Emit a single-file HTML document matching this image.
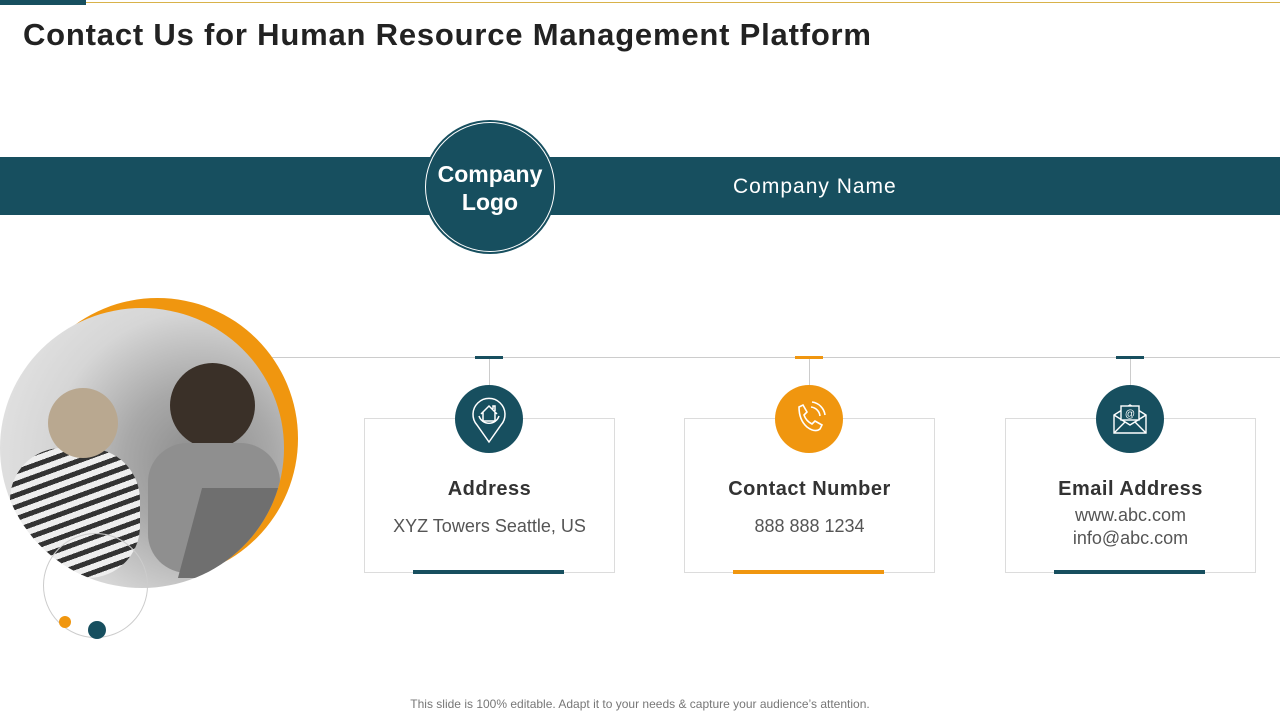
<!DOCTYPE html>
<html><head><meta charset="utf-8"><style>
body{margin:0;width:1280px;height:720px;position:relative;overflow:hidden;background:#fff;font-family:"Liberation Sans",sans-serif}
.a{position:absolute}
.card{position:absolute;top:418px;width:249px;height:153px;border:1px solid #dcdcdc;background:#fff;text-align:center;color:#444}
.card h3{margin:0;position:absolute;top:59px;width:100%;font-size:20px;font-weight:bold;color:#333;letter-spacing:0.5px}
.card p{margin:0;position:absolute;top:96px;width:100%;font-size:18px;color:#555;line-height:23px}
.bar{position:absolute;left:48px;bottom:-2px;width:151px;height:4px}
.ic{position:absolute;top:385px;width:68px;height:68px;border-radius:50%}
.mk{position:absolute;top:356px;width:28px;height:3px}
.vl{position:absolute;top:359px;width:1px;height:26px;background:#ccc}
</style></head><body>
<div class="a" style="left:0;top:2px;width:1280px;height:1px;background:#d8b24a"></div>
<div class="a" style="left:0;top:0;width:86px;height:5px;background:#174f5f"></div>
<div class="a" style="left:23px;top:17px;font-size:31px;font-weight:bold;color:#222;letter-spacing:0.8px">Contact Us for Human Resource Management Platform</div>
<div class="a" style="left:0;top:157px;width:1280px;height:58px;background:#174f5f"></div>
<div class="a" style="left:423px;top:120px;width:134px;height:134px;border-radius:50%;background:#174f5f"></div>
<div class="a" style="left:425px;top:122px;width:128px;height:128px;border-radius:50%;border:1px solid #fff"></div>
<div class="a" style="left:423px;top:160px;width:134px;text-align:center;color:#fff;font-weight:bold;font-size:23px;line-height:28px">Company<br>Logo</div>
<div class="a" style="left:733px;top:175px;font-size:21px;color:#fff;letter-spacing:1px">Company Name</div>

<div class="a" style="left:270px;top:357px;width:1010px;height:1px;background:#ccc"></div>
<div class="a" style="left:17px;top:298px;width:281px;height:281px;border-radius:50%;background:#f0960f"></div>
<div class="a" style="left:0;top:308px;width:284px;height:280px;border-radius:50%;background:radial-gradient(circle at 70% 55%,#8a8a8a 0,#a9a9a9 30%,#d6d6d6 60%,#e9e9e9 100%);overflow:hidden">
<div class="a" style="left:10px;top:140px;width:130px;height:130px;border-radius:40%;background:repeating-linear-gradient(160deg,#333 0 5px,#eee 5px 11px)"></div>
<div class="a" style="left:48px;top:80px;width:70px;height:70px;border-radius:50%;background:#b9a890"></div>
<div class="a" style="left:170px;top:55px;width:85px;height:85px;border-radius:50%;background:#3a3028"></div>
<div class="a" style="left:148px;top:135px;width:132px;height:130px;border-radius:30%;background:#8f8f8f"></div>
<div class="a" style="left:190px;top:180px;width:80px;height:90px;background:#6f6f6f;transform:skewX(-15deg)"></div>
</div>
<div class="a" style="left:43px;top:533px;width:103px;height:103px;border-radius:50%;border:1px solid #ccc"></div>
<div class="a" style="left:59px;top:616px;width:12px;height:12px;border-radius:50%;background:#f0960f"></div>
<div class="a" style="left:88px;top:621px;width:18px;height:18px;border-radius:50%;background:#174f5f"></div>

<div class="card" style="left:364px"><h3>Address</h3><p>XYZ Towers Seattle, US</p><div class="bar" style="background:#174f5f"></div></div>
<div class="card" style="left:684px"><h3>Contact Number</h3><p>888 888 1234</p><div class="bar" style="background:#f0960f"></div></div>
<div class="card" style="left:1005px"><h3>Email Address</h3><p style="top:85px">www.abc.com<br>info@abc.com</p><div class="bar" style="background:#174f5f"></div></div>

<div class="mk" style="left:475px;background:#174f5f"></div><div class="vl" style="left:489px"></div>
<div class="mk" style="left:795px;background:#f0960f"></div><div class="vl" style="left:809px"></div>
<div class="mk" style="left:1116px;background:#174f5f"></div><div class="vl" style="left:1130px"></div>

<div class="ic" style="left:455px;background:#174f5f"><svg width="68" height="68" viewBox="0 0 68 68" fill="none" stroke="#fff" stroke-width="1.5"><path d="M34 57 L22 40 A16 16 0 1 1 46 40 Z"/><path d="M24 31 A10.5 10.5 0 0 0 44 31"/><path d="M26 29 L34 21 L42 29 M28 27 V36 H40 V27 M38 24 V21 H40 V26"/></svg></div>
<div class="ic" style="left:775px;background:#f0960f"><svg width="68" height="68" viewBox="0 0 68 68" fill="none" stroke="#fff" stroke-width="1.6"><path d="M24 22 L28 20 L32 27 L29 30 Q31 36 37 39 L40 36 L47 40 L45 44 Q40 48 32 42 Q24 35 24 22 Z"/><path d="M36 22 A10 10 0 0 1 45 31"/><path d="M37 17 A15 15 0 0 1 50 30"/></svg></div>
<div class="ic" style="left:1096px;background:#174f5f"><svg width="68" height="68" viewBox="0 0 68 68" fill="none" stroke="#fff" stroke-width="1.4"><path d="M18 30 L34 20 L50 30 V48 H18 Z"/><path d="M18 30 L34 40 L50 30 M18 48 L29 37 M50 48 L39 37"/><rect x="25" y="21" width="18" height="14" fill="#174f5f"/><text x="34" y="32" font-size="10" fill="#fff" stroke="none" text-anchor="middle" font-family="Liberation Sans">@</text></svg></div>

<div class="a" style="left:0;top:697px;width:1280px;text-align:center;font-size:12px;color:#777">This slide is 100% editable. Adapt it to your needs &amp; capture your audience’s attention.</div>
</body></html>
